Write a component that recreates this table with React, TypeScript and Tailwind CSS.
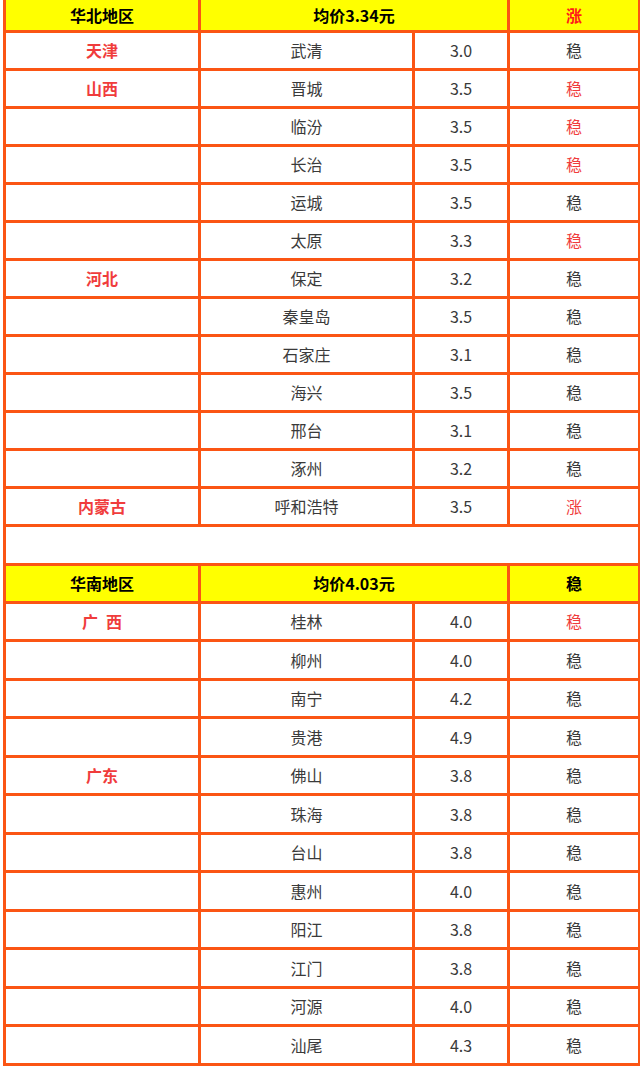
import React from "react";

type Row = {
  province?: string;
  city: string;
  price: string;
  trend: string;
  hot?: boolean;
};

const northRows: Row[] = [
  { province: "天津", city: "武清", price: "3.0", trend: "稳" },
  { province: "山西", city: "晋城", price: "3.5", trend: "稳", hot: true },
  { city: "临汾", price: "3.5", trend: "稳", hot: true },
  { city: "长治", price: "3.5", trend: "稳", hot: true },
  { city: "运城", price: "3.5", trend: "稳" },
  { city: "太原", price: "3.3", trend: "稳", hot: true },
  { province: "河北", city: "保定", price: "3.2", trend: "稳" },
  { city: "秦皇岛", price: "3.5", trend: "稳" },
  { city: "石家庄", price: "3.1", trend: "稳" },
  { city: "海兴", price: "3.5", trend: "稳" },
  { city: "邢台", price: "3.1", trend: "稳" },
  { city: "涿州", price: "3.2", trend: "稳" },
  { province: "内蒙古", city: "呼和浩特", price: "3.5", trend: "涨", hot: true },
];

const southRows: Row[] = [
  { province: "广\u2002西", city: "桂林", price: "4.0", trend: "稳", hot: true },
  { city: "柳州", price: "4.0", trend: "稳" },
  { city: "南宁", price: "4.2", trend: "稳" },
  { city: "贵港", price: "4.9", trend: "稳" },
  { province: "广东", city: "佛山", price: "3.8", trend: "稳" },
  { city: "珠海", price: "3.8", trend: "稳" },
  { city: "台山", price: "3.8", trend: "稳" },
  { city: "惠州", price: "4.0", trend: "稳" },
  { city: "阳江", price: "3.8", trend: "稳" },
  { city: "江门", price: "3.8", trend: "稳" },
  { city: "河源", price: "4.0", trend: "稳" },
  { city: "汕尾", price: "4.3", trend: "稳" },
];

const cell = "border-[3px] border-[#fb5514] text-center align-middle p-0";

function HeaderRow({
  region,
  avg,
  trend,
  trendRed,
  first,
}: {
  region: string;
  avg: string;
  trend: string;
  trendRed?: boolean;
  first?: boolean;
}) {
  const top = first ? " border-t-0" : "";
  return (
    <tr className={first ? "h-[31px]" : "h-[38px]"}>
      <td className={cell + top + " bg-[#ffff00] font-bold text-black"}>{region}</td>
      <td colSpan={2} className={cell + top + " bg-[#ffff00] font-bold text-black"}>
        {avg}
      </td>
      <td
        className={
          cell +
          top +
          " bg-[#ffff00] font-bold " +
          (trendRed ? "text-[#ff1a1a]" : "text-black")
        }
      >
        {trend}
      </td>
    </tr>
  );
}

function DataRow({ row, tall }: { row: Row; tall?: boolean }) {
  return (
    <tr className={tall ? "h-[38.5px]" : "h-[38px]"}>
      <td className={cell + " font-bold text-[#f03c3c]"}>{row.province ?? ""}</td>
      <td className={cell + " text-[#3a3a3a]"}>{row.city}</td>
      <td className={cell + " text-[#3a3a3a]"}>{row.price}</td>
      <td className={cell + (row.hot ? " text-[#f03c3c]" : " text-[#3a3a3a]")}>
        {row.trend}
      </td>
    </tr>
  );
}

export default function App() {
  return (
    <div
      className="w-[640px] h-[1068px] bg-white overflow-hidden"
      style={{ fontFamily: '"Noto Sans CJK SC", "Noto Sans", sans-serif' }}
    >
      <table className="ml-[3px] w-[635px] table-fixed border-collapse text-[16px] leading-none">
        <colgroup>
          <col className="w-[195px]" />
          <col className="w-[214px]" />
          <col className="w-[95px]" />
          <col className="w-[131px]" />
        </colgroup>
        <tbody>
          <HeaderRow region="华北地区" avg="均价3.34元" trend="涨" trendRed first />
          {northRows.map((r, i) => (
            <DataRow key={"n" + i} row={r} />
          ))}
          <tr className="h-[39px]">
            <td colSpan={4} className={cell} />
          </tr>
          <HeaderRow region="华南地区" avg="均价4.03元" trend="稳" />
          {southRows.map((r, i) => (
            <DataRow key={"s" + i} row={r} tall />
          ))}
        </tbody>
      </table>
    </div>
  );
}
